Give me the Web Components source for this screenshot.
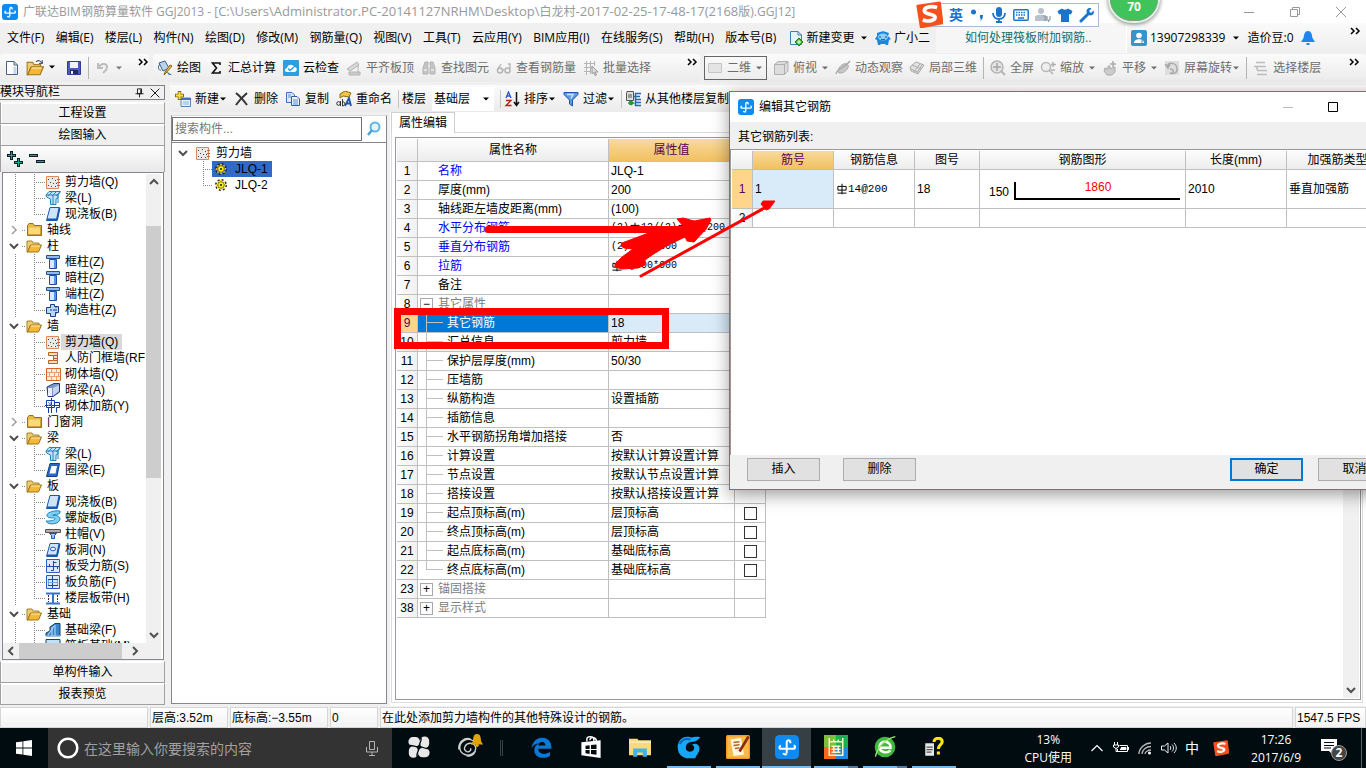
<!DOCTYPE html>
<html lang="zh-CN">
<head>
<meta charset="utf-8">
<title>广联达BIM钢筋算量软件 GGJ2013</title>
<style>
html, body { margin: 0; height: 100%; }
body {
  display: flex; flex-direction: column; position: relative; overflow: hidden;
  background: #f0f0f0; color: #000;
  font: 12px/16px "Open Sans", "Noto Sans CJK SC", sans-serif;
}
main { flex: 1; min-height: 0; display: grid; grid-template-columns: 165px minmax(0, 1fr); column-gap: 5px; }
.right { display: flex; flex-direction: column; min-height: 0; min-width: 0; gap: 2px; }
.panes { flex: 1; min-height: 0; display: grid; grid-template-columns: 217px minmax(0, 1fr); column-gap: 3px; }
</style>
</head>
<body>
<title-bar></title-bar>
<menu-bar></menu-bar>
<main-tools></main-tools>
<main>
  <nav-panel></nav-panel>
  <div class="right">
    <edit-tools></edit-tools>
    <div class="panes">
      <component-list></component-list>
      <property-panel></property-panel>
    </div>
  </div>
</main>
<status-bar></status-bar>
<task-bar></task-bar>
<ime-bar></ime-bar>
<load-ball>70</load-ball>
<rebar-dialog></rebar-dialog>
<ink-layer></ink-layer>

<script>
const BASE = `
*,*::before,*::after{box-sizing:border-box}
button,input,select{font:inherit;color:inherit;margin:0;padding:0;border:0;border-radius:0;background:none}
a{color:inherit;text-decoration:none}
`;
const SONG = `"Liberation Sans","Noto Sans CJK SC",sans-serif`;

function define(tag, css, html) {
  const template = document.createElement('template');
  template.innerHTML = `<style>${BASE}${css}</style>${html}`;
  customElements.define(tag, class extends HTMLElement {
    constructor() {
      super();
      this.attachShadow({ mode: 'open' }).append(template.content.cloneNode(true));
    }
  });
}

/* ---------- icons ---------- */
const G = '#b4b4b4';
const folderOpen = `<path d="M1 3h5l1 2h6v3H4l-2 6H1z" fill="#f0cf72" stroke="#a9802a"/><path d="M4.500 7H15.500L12.500 14H1.500z" fill="#f7b733" stroke="#9a7420"/><path d="M5 8h9" stroke="#fff0b8"/>`;
const hook = `<path d="M10.300 5.500C10.500 3 7.800 2.800 7.800 5v7.200M7.800 12.500c-.8.800-2 .500-2.300-.5M4 7.200C2.500 7.500 2.600 9.300 4 9.200H12c1.800 0 1.800-2.200.4-2.200" fill="none" stroke="#fff" stroke-width="1.300"/>`;
const sogou = `<path d="M1 3L14 1l1.500 12L3 15.500z" fill="#f4511e" stroke="#f4511e" stroke-width="1.500" stroke-linejoin="round"/><path d="M12.500 3.800C8 2.500 4.500 4 5 6.200c.5 2 6 1.300 6.300 3.300.3 2-4 3-7.300 1.800" fill="none" stroke="#fff" stroke-width="2.200"/>`;
const concrete = `<path d="M1.500 2.500H13.500V14.500H1.500z" fill="#ebe9e7" stroke="#d98a5c"/><path d="M3 5.500h1M7 4.500h1M10 6.500h1M5 8.500h1M8 9.500h1M3 11.500h1M10 12.500h1M6 12.500h1M11 9.500h1" stroke="#444"/><path d="M12 5.500h3M12 8.500h3M12 11.500h3" stroke="#c9662c"/>`;
const column = `<path d="M1.500 1.500H14.500V4.500H1.500z" fill="#8fb9ee" stroke="#1d4fa6"/><path d="M4.500 5.500H11.500V14.500H4.500z" fill="#d9e9fb" stroke="#1d4fa6"/><path d="M10 6v8" stroke="#5e93dc" stroke-width="2"/>`;
const slab = `<path d="M5 1.500H14.500L12 14.500H1.500z" fill="#cfe4fb" stroke="#1b56b4"/><path d="M2 13.500H12L14.500 2" fill="none" stroke="#1b56b4" stroke-width="2"/>`;
const frame = (inner) => `<path d="M1.500 1.500H14.500V14.500H1.500z" fill="#dce9fb" stroke="#2a5cc0"/>${inner}`;
const ICONS = {
  app: `<rect width="16" height="16" rx="3" fill="#0d8bf2"/>${hook}`,
  doc: `<path d="M2.500 1.500H10L13.500 5V14.500H2.500z" fill="#fff" stroke="#47607e"/><path d="M10 1.500V5H13.500" fill="none" stroke="#47607e"/><path d="M11 7v7" stroke="#c5d5ea" stroke-width="3"/>`,
  open: folderOpen + `<path d="M9 2.500c2-2 4-1 5 1M14.500 1v3h-3" fill="none" stroke="#4c5b70"/>`,
  save: `<path d="M1.500 1.500H14.500V14.500H1.500z" fill="#5058c8" stroke="#343b96"/><path d="M4 2H12V8H4z" fill="#f2f2fa"/><path d="M4 10H12V14H4z" fill="#222a60"/><path d="M5 11h2v3H5z" fill="#eee"/>`,
  undo: `<path d="M3 3v5h5M3.500 7.500C6 2.500 12 3 12 7c0 3-2 4-4 6" fill="none" stroke="#bdbdbd" stroke-width="2"/>`,
  paint: `<path d="M2 3L8 1L12 8L6 11z" fill="#b9d4ee" stroke="#3e6189"/><path d="M3 4c-3 3-1 7 1 6" fill="none" stroke="#3e6189"/><path d="M15 6L9 13L7 15L8 12L13 5z" fill="#f0c24c" stroke="#8b6510"/><path d="M9 11l3 4h3z" fill="#3b70bd"/>`,
  sigma: `<path d="M12 5V3H4.500L8.500 8L4.500 13H12V11" fill="none" stroke="#111" stroke-width="1.600"/>`,
  cloud: `<rect width="16" height="16" rx="1" fill="#2b9fe0"/><path d="M4 12C1 12 1.500 8 4 8C4.500 4 10 3.500 11 7c4 0 3.500 5 0 5z" fill="#fff"/><path d="M5 8.500l2 2L11 7" fill="none" stroke="#2b9fe0" stroke-width="1.500"/>`,
  flush: `<path d="M1 9L11 2l2 3L4 11z" fill="#d8d8d8" stroke="${G}"/><path d="M3 12H14V15H3zM12 5v8" fill="#ccc" stroke="${G}"/>`,
  find: `<path d="M2 14V8L4 2H7V14zM9 14V2h3l2 6v6z" fill="#c4c4c4" stroke="${G}"/><path d="M3 10h3M10 10h3M7 6h2" stroke="#fff"/>`,
  glasses: `<circle cx="4" cy="10.500" r="2.500" fill="none" stroke="${G}" stroke-width="1.500"/><circle cx="11.500" cy="10.500" r="2.500" fill="none" stroke="${G}" stroke-width="1.500"/><path d="M6.500 10h2M2 9L5 4M14 9V4h-2" fill="none" stroke="${G}" stroke-width="1.300"/>`,
  batch: `<path d="M1 3.500H12M1 7.500H9M1 11.500H8M3.500 1V15M7.500 1V14M11.500 1V6" stroke="${G}"/><path d="M9 6l6 6h-3l1.500 3-1.500.5-1-3-2 1z" fill="#ddd" stroke="#999"/>`,
  two: `<path d="M1.500 3.500H14.500V12.500H1.500z" fill="#e4e4e4" stroke="#c4c4c4"/>`,
  cube: `<path d="M1.500 4.500L5 1.500H15L11.500 4.500zM1.500 4.500H11.500V14.500H1.500zM11.500 4.500L15 1.500V11L11.500 14.500z" fill="#dcdcdc" stroke="#b0b0b0"/>`,
  orbit: `<path d="M4 13C1 9 8 2 12 4s-2 10-8 9z" fill="#c8c8c8" stroke="#aaa"/><path d="M1 14C2 8 9 9 15 1" fill="none" stroke="#aaa" stroke-width="1.500"/>`,
  local: `<path d="M1 7L7 2L15 5L9 14L2 11z" fill="#e2e2e2" stroke="#aaa"/><path d="M3 5l9 4M5 12l6-8M2 9l7 3M8 13l5-8" stroke="#aaa"/>`,
  full: `<circle cx="7" cy="7" r="6" fill="#e4e4e4" stroke="#b4b4b4" stroke-width="1.500"/><path d="M7 3v8M3 7h8" stroke="#a4a4a4" stroke-width="1.500"/><path d="M11 11l4 4" stroke="#b4b4b4" stroke-width="2"/>`,
  zoom: `<circle cx="6" cy="7" r="4.500" fill="#eee" stroke="#b8b8b8" stroke-width="1.500"/><path d="M9 10l4 4M13 2v5M11 4.500h5M11 10h4" stroke="#b0b0b0" stroke-width="1.500"/>`,
  pan: `<path d="M3 8l3 1V6l2 0v3l5-2v5l-3 3H5L2 11z" fill="#ccc" stroke="#aaa"/><path d="M11 1v6M8 4h6" stroke="#aaa" stroke-width="1.500"/>`,
  rotate: `<path d="M1 1H15V15H1z" fill="#dedede"/><path d="M3 7c1-5 9-5 10 1s-5 6-7 5M6 9c3 0 5 2 1 5M1 4l3 4 2-4" fill="none" stroke="#aaa" stroke-width="1.500"/>`,
  floor: `<path d="M3 2.500H12M4 6.500H13M4 10.500H14M4 14.500H14M4 6v4M1 6.500H4" stroke="#bcbcbc" stroke-width="1.500"/>`,
  change: `<path d="M2.500 1.500H10L13.500 5V14.500H2.500z" fill="#e6f3fb" stroke="#3e7fae"/><path d="M10 1.500V5H13.500" fill="none" stroke="#3e7fae"/><path d="M11 8L15 12L11 16L7 12z" fill="#43b42b" stroke="#207d12"/><path d="M9 12h4M11 10v4" stroke="#fff"/>`,
  xiaoer: `<path d="M2 3l3-1c2-1 4-1 6 0l3 1-1 3 3 3-2 1-1 5h-2l-1-1H6l-1 1H3L2 10 0 9l2-3z" fill="#1a87dd"/><ellipse cx="8" cy="7" rx="5" ry="3.500" fill="#8fd0f7"/><path d="M5 6v2M11 6v2M6 9c1 1 3 1 4 0" stroke="#114d8c" fill="none"/>`,
  user: `<rect width="16" height="16" rx="2" fill="#3a93c8"/><circle cx="8" cy="5.500" r="2.800" fill="#fff"/><path d="M3 13c0-5 10-5 10 0z" fill="#fff"/><path d="M11 10v4" stroke="#3a93c8"/>`,
  bell: `<path d="M8 1c4 0 4 5 4.500 7L15 12H1L3.500 8C4 6 4 1 8 1z" fill="#1f86ee"/><path d="M6.500 14h3" stroke="#1f86ee" stroke-width="2"/>`,
  add: `<path d="M6 7H15.500V15.500H6z" fill="#e9f1fb" stroke="#5a82b8"/><path d="M6 8h10" stroke="#3f72bc" stroke-width="2"/><path d="M8 11h6M8 13h6" stroke="#8fb0dc"/><path d="M4.500 0V9M0 4.500H9" stroke="#8a6d14" stroke-width="3.500"/><path d="M4.500 1V8M1 4.500H8" stroke="#f7dc43" stroke-width="2"/>`,
  del: `<path d="M2 2Q7 6 13 14M13 2Q6 8 2 14" stroke="#333" stroke-width="2" fill="none"/>`,
  copy: `<path d="M1.500 1.500H7L9.500 4V11.500H1.500z" fill="#dce9fb" stroke="#3b6db8"/><path d="M6.500 5.500H12L14.500 8V14.500H6.500z" fill="#e9f1fd" stroke="#2f5ea8"/><path d="M3 4h3M3 6h3M8 9h5M8 11h5M8 13h5" stroke="#5e8fd4"/>`,
  rename: `<path d="M4 3L9 0L15 2L13 6L7 5L4 7z" fill="#f2c544" stroke="#8f6b16"/><path d="M9 15L13 7L15 15M10 12.500h4" fill="none" stroke="#2456a8" stroke-width="1.800"/><circle cx="2.500" cy="12.500" r="1.800" fill="none" stroke="#333"/><path d="M4.500 10v5M6.500 8v7M6.500 11c3-1 3 4 0 4" fill="none" stroke="#333"/>`,
  sort: `<path d="M2 7L4.500 1L7 7M3 5h3" fill="none" stroke="#2a56c6" stroke-width="1.300"/><path d="M2 9.500H7L2 14.500H7.500" fill="none" stroke="#b32020" stroke-width="1.300"/><path d="M12.500 1V14M10 11l2.500 3.500L15 11" fill="none" stroke="#111" stroke-width="1.500"/>`,
  filter: `<path d="M1 1.500H15V3.500L9.500 9V15L6.500 13V9L1 3.500z" fill="#5b9be6" stroke="#1d55b0"/><path d="M4 3.500h6l-2 4" fill="none" stroke="#cfe4ff" stroke-width="1.500"/>`,
  fromfloor: `<path d="M2 .5H8.500V9.500H1.500V3z" fill="#ddd" stroke="#555"/><path d="M3 4h4M3 6h4" stroke="#555"/><path d="M10 2.500h6M9 5.500h6M10 8.500h6M10 11.500h6M10 14.500h6M10.500 2v13" stroke="#2a66b8" stroke-width="1.500"/><path d="M5 10v4M3 12h5l-2-2M6 14l2-2" stroke="#1e9a35" stroke-width="1.700" fill="none"/>`,
  search: `<circle cx="9" cy="6" r="4.500" fill="#e3f4ff" stroke="#5db5ec" stroke-width="2"/><path d="M6 9L2 14" stroke="#4aa3dc" stroke-width="2.500"/>`,
  gear: `<circle cx="8" cy="8" r="5.200" fill="none" stroke="#222" stroke-width="1.500" stroke-dasharray="2 2.080"/><path d="M8 3V13M3 8H13M4.500 4.500L11.500 11.500M11.500 4.500L4.500 11.500" stroke="#f5e000" stroke-width="1.600"/><circle cx="8" cy="8" r="3.300" fill="#fff01c" stroke="#55500a" stroke-width=".8"/><circle cx="8" cy="8" r="1.100" fill="#222"/>`,
  expand: `<path d="M4.500 0V9M0 4.500H9M11.500 7V16M7 11.500H16" stroke="#022" stroke-width="3"/><path d="M4.500 1V8M1 4.500H8M11.500 8V15M8 11.500H15" stroke="#1aa59a"/>`,
  collapse: `<path d="M0 4.500H9M7 10.500H16" stroke="#022" stroke-width="3"/><path d="M1 4.500H8M8 10.500H15" stroke="#1aa59a"/>`,
  folder: `<path d="M1.500 3.500L3 1.500H7L8.500 3.500H15.500V13.500H1.500z" fill="#e5b84a" stroke="#8f6d22"/><path d="M2.500 5.500H14.500V12.500H2.500z" fill="#fbd978"/><path d="M2 13h13M15 5v8" stroke="#a87c1c"/>`,
  folderopen: folderOpen,
  wall: concrete, column, slab,
  beam: `<path d="M1 5L4 1.500H15.500L13 5V8L11 9V14.500H5.500V9L1.500 7z" fill="#bfe3f8" stroke="#2383bd"/><path d="M1 5H12M8 6v8M13 4v9M3 6l4-4M7 6l4-4M11 6l4-4" stroke="#2383bd"/>`,
  tiecol: `<path d="M5.500 2.500h4v2h4v6h-3v4h-5v-3h-4v-6h4z" fill="#b9d6f7" stroke="#16408c"/><path d="M11 4v8M5 8h5" stroke="#16408c" stroke-dasharray="2 1"/>`,
  doorwall: `<path d="M3.500 2.500H12.500V13.500H3.500V10.500H8.500V5.500H3.500z" fill="#fbe0cf" stroke="#c65b1c"/><path d="M9 5.500h3M9 8.500h3M9 10.500h3" stroke="#c65b1c"/>`,
  brick: `<path d="M1.500 2.500H15.500V14.500H1.500z" fill="#fdeee4" stroke="#d1672f"/><path d="M2 6.500H15M2 10.500H15M6.500 3V6M11.500 3V6M4.500 7v3M9.500 7v3M13.500 7v3M6.500 11v3M11.500 11v3" stroke="#e5a07c"/>`,
  hidbeam: `<path d="M2 5L9 1.500H14.500V10L8 14.500H3z" fill="#7b96cc" stroke="#22356b"/><path d="M3 6H7V14H3z" fill="#e8eefa"/><path d="M8 6v8l6-5V3z" fill="#c4d3ee"/>`,
  brickbar: `<path d="M1.500 2.500h8v7h-8zM0 7.500h15M6.500 0v15M3.500 10v5M9.500 4.500h5v5h-3v5" fill="none" stroke="#1738a8"/><path d="M3 4l4 4M7 3l-4 5" stroke="#6e8bd8"/>`,
  ring: `<path d="M5 1.500H14.500L12 14.500H1.500z" fill="#2d68c4" stroke="#143e8a"/><path d="M6.500 4H12L10.500 11.500H4.500z" fill="#fff"/>`,
  spiral: `<path d="M15 1C8 0 1 3 2 6s9 1 8 3-6 2-9 2c2 5 14 3 14-2S6 6 8 5s5 0 7-2z" fill="#7fd0f5" stroke="#1f84c0"/>`,
  cap: `<path d="M.5 3.500H15.500V6.500H.5z" fill="#b0b0b0" stroke="#555"/><path d="M4.500 7.500H11.500L9.500 9.500V12.500H6.500V9.500z" fill="#9fc3f3" stroke="#1b50b0"/>`,
  hole: slab + `<ellipse cx="8" cy="7" rx="2.500" ry="1.800" fill="#fff" stroke="#1b56b4"/>`,
  rebars: frame(`<path d="M2 8.500H14M8.500 3V12.500H6M4.500 6v2M12.500 11V8M8.500 4.500h3" stroke="#1b46a8" fill="none"/>`),
  rebarf: frame(`<path d="M7.500 2V14M3 5.500H13M3 11.500H13" stroke="#1b46a8" fill="none"/><path d="M3.500 6v5M12.500 6v5M3 8.500H13" stroke="#7ea0e0"/>`),
  band: `<path d="M1 3.500H15M1 13.500H15" stroke="#3773cc" stroke-width="2"/><path d="M3.500 5V12M12.500 5V12" stroke="#333" stroke-dasharray="2 1"/><path d="M8 4V13" stroke="#3773cc" stroke-width="2"/>`,
  fbeam: `<path d="M1 14V11L5 9V5L10 1.500H15V14z" fill="#3a86cc" stroke="#0e4474"/><path d="M7 5v9M10 3v11M1 14h14" stroke="#bfe0f8"/><path d="M3 13L9 4" stroke="#bfe0f8"/>`,
  raft: `<path d="M1 1.500H15V14H1z" fill="#bfe0f8" stroke="#0e4474"/>`,
  min: `<path d="M3 8.500H13" stroke="currentColor"/>`,
  max: `<path d="M3.500 3.500H12.500V12.500H3.500z" fill="none" stroke="currentColor"/>`,
  restore: `<path d="M3.500 5.500H10.500V12.500H3.500zM5.500 5V3.500H12.500V10.500H11" fill="none" stroke="currentColor"/>`,
  close: `<path d="M3 3L13 13M13 3L3 13" stroke="currentColor"/>`,
  pin: `<path d="M5.500 3.500H10.500V9.500H5.500zM3 9.500H13M8 10V14" fill="none" stroke="#000"/><path d="M9.500 4V9" stroke="#000"/>`,
  up: `<path d="M4 10L8 6L12 10" fill="none" stroke="#505050" stroke-width="2"/>`,
  down: `<path d="M4 6L8 10L12 6" fill="none" stroke="#505050" stroke-width="2"/>`,
  left: `<path d="M10 4L6 8L10 12" fill="none" stroke="#505050" stroke-width="2"/>`,
  right: `<path d="M6 4L10 8L6 12" fill="none" stroke="#505050" stroke-width="2"/>`,
  closed: `<path d="M6 4L10 8L6 12" fill="none" stroke="#a0a0a0" stroke-width="1.500"/>`,
  more: `<path d="M4 5l3 3-3 3M9 5l3 3-3 3" fill="none" stroke="#000" stroke-width="1.500"/>`,
  drop: `<path d="M5 6.500H11L8 9.500z" fill="currentColor"/>`,
  rebar: `<path d="M8 1V15M2.500 4.500H13.500V9.500H2.500zM2 13.500H14" fill="none" stroke="#000" stroke-width="1.300"/>`,
  sogou,
  comma: `<circle cx="4.500" cy="5" r="2.500" fill="#1b74cc"/><path d="M11 8h3c0 3-1 5-3 6 1-2 1-3 0-3z" fill="#1b74cc"/>`,
  mic: `<rect x="5" y="0" width="6" height="10" rx="3" fill="#1b74cc"/><path d="M2 6c0 8 12 8 12 0M8 12v3M5 15h6" fill="none" stroke="#1b74cc" stroke-width="1.800"/>`,
  keyboard: `<rect x=".8" y="2.800" width="14.400" height="10.400" rx="1" fill="#fff" stroke="#1b74cc" stroke-width="1.500"/><path d="M3 5.500H13M3 8H13" stroke="#1b74cc" stroke-width="1.500" stroke-dasharray="1.500 1"/><path d="M5 11h6" stroke="#1b74cc" stroke-width="1.500"/>`,
  person: `<circle cx="6" cy="4" r="3" fill="#b9c1ca"/><path d="M0 14V10c0-3 12-3 12 0v4z" fill="#b9c1ca"/><path d="M8 9h2v5M12 9v4h3V9M13.500 13v2" fill="none" stroke="#8f9aa6" stroke-width="1.200"/>`,
  shirt: `<path d="M5 1.500C6 3 10 3 11 1.500L15.500 4L14 7.500L12 7V15H4V7L2 7.500L.5 4z" fill="#1b74cc"/>`,
  wrench: `<path d="M2 14L9 7" stroke="#1b74cc" stroke-width="3" stroke-linecap="round"/><path d="M14.500 3.500L12 6L10 4L12.500 1.500C9 0 6.500 3 8 6.500l1.500 1.500C13 9.500 16 7 14.500 3.500z" fill="#1b74cc"/>`,
  windows: `<path d="M0 2.300L6.500 1.400V7.600H0zM7.300 1.300L16 0V7.600H7.300zM0 8.400H6.500V14.600L0 13.700zM7.300 8.400H16V16L7.300 14.700z" fill="#fff"/>`,
  cortana: `<circle cx="8" cy="8" r="6.200" fill="none" stroke="#fff" stroke-width="1.700"/>`,
  micline: `<path d="M5.500 1.500H10.500V9.500H5.500zM2.500 7v5H13.500V7M8 12v3M5 15.500h6" fill="none" stroke="#b4b4b4" stroke-width="1"/>`,
  pinwheel: `<g fill="#e8e8e8"><rect x=".3" y=".8" width="8.400" height="6.600" rx="3.200"/><rect x="8.800" y=".3" width="6.600" height="8.400" rx="3.200"/><rect x="7.300" y="8.800" width="8.400" height="6.600" rx="3.200"/><rect x=".6" y="7.500" width="6.600" height="8.400" rx="3.200"/></g><path d="M8.300 7.800C8 4 11 3 9 1M8.300 7.800C12 8 13 10 15.500 9M8.300 7.800C8 12 5 13 7 15.500M8.300 7.800C4 8 3 6 .5 7" fill="none" stroke="#000c10" stroke-width=".9"/>`,
  swirl: `<path d="M12 3C7 0 1 4 1.500 9S8 16 12 13s2-8-2-8-6 4-4 6 5 0 4-2M10 1.500C5 0 0 4 .7 10M14 11c-1 3-4 5-7 4" fill="none" stroke="#d0d0d0" stroke-width="1.100"/>`,
  goldbell: `<path d="M8 1c5 0 4 6 5 9l2 3H1l2-3C4 7 3 1 8 1z" fill="#dfa406"/><circle cx="8" cy="14" r="2" fill="#dfa406"/>`,
  edge: `<path d="M.5 8.500C1 4 4 .5 8.500.5c5 0 7.500 4 7 8.500H5.500c0 4 5 5 9 2.500v3C9 17.500 2.500 15.500 2.500 10c0-2.500 1.500-4 3.500-5C3.500 5 1.500 6.500.5 8.500zM5.500 6.500h5.500c0-3.500-5-3.500-5.500 0z" fill="#0a78d7"/>`,
  store: `<path d="M1 4.500L15 3V16L1 14z" fill="#fff"/><path d="M5 4V2c0-2 5-2 5 0v2M7 3c1-3 5-2 5 1" fill="none" stroke="#fff"/><path d="M4 7l3-.3V9.500H4zM8 6.600l4-.4v3.300H8zM4 10.200h3V13l-3-.4zM8 10.200h4v3.400l-4-.5z" fill="#000c10"/>`,
  explorer: `<path d="M0 2H6L7 3H16V14H0z" fill="#f9d97c"/><path d="M0 4H16V5H0z" fill="#fdf0c0"/><path d="M3 9H13V15H10V12H6V15H3z" fill="#3fb3ea"/>`,
  glodon: `<path d="M15.500 1.500C12 .5 11 2 9 1.500 3 0 0 5 .5 9c.5 5 5 7 8 6.500l4 0c-1-1 2.500-3 2.500-6.500C15 6.500 12 5 10 6.500c2 .5 2 4-.5 4.500S5.500 10 6 7.500 9 4.500 11 4.500c2 0 3-1.500 4.500-3z" fill="#19a6f5"/><path d="M2 6c1-3 4-4 7-3" fill="none" stroke="#0567c0" stroke-width="1.500"/>`,
  notes: `<rect width="16" height="16" rx="1" fill="#f79a1e"/><path d="M1 1H15V15H1z" fill="#fbb94b"/><path d="M3 3L10 2L12 13L5 14z" fill="#fff6e0"/><path d="M5 5l4-.5M5 7l4-.5M6 9l3-.5" stroke="#b0612a"/><path d="M15 1L9 11" stroke="#8c2d0d" stroke-width="1.800"/>`,
  calc: `<path d="M0 0H8V8H0z" fill="#7cbf3a"/><path d="M8 0H16V8H8z" fill="#1cae52"/><path d="M0 8H8V16H0z" fill="#f4691f"/><path d="M8 8H16V16H8z" fill="#1f8be0"/><path d="M3 4.500H13M3 13.500H13M3.500 2V14M12.500 2V14M6.500 3v2M9.500 3v2M5 7.500H11M5 9.500H11M5 11.500H11M6.500 7v5M9.500 7v5" fill="none" stroke="#fff3c4"/>`,
  green: `<circle cx="8" cy="8" r="7.500" fill="#3ebb3f"/><path d="M4 8.500H12C12.500 3 4 2.500 4 8c0 4 5.500 5 8 2.500" fill="none" stroke="#fff" stroke-width="1.800"/><path d="M1 15C3 7 9 2 15.500.5" fill="none" stroke="#9fe36b"/>`,
  help: `<path d="M1 5H8V15H1z" fill="#e8e8e8"/><path d="M2 8h5M2 10h5M2 12h4" stroke="#555"/><path d="M8 4C8 0 15 0 14.500 4c0 2-3 2.500-3 5.500M11.500 11.500V14" fill="none" stroke="#ffe900" stroke-width="2.500"/>`,
  chev: `<path d="M2.500 11L8 5.500L13.500 11" fill="none" stroke="#fff" stroke-width="1.200"/>`,
  battery: `<path d="M6.500 5.500H14.500V11.500H4.500V9" fill="none" stroke="#fff"/><path d="M15.500 7v3M8 7.500h5v2H7" stroke="#fff" fill="#fff"/><path d="M1.500 2v3M4.500 2v3M.5 5H5.500V7L3 8.500L.5 7zM3 8v3.500h2" stroke="#fff" fill="none"/>`,
  wifi: `<path d="M2 14C2 8 8 3 14 3M5 14C5 10 9 6.500 14 6.500M8 14C8 12 11 10 14 10" fill="none" stroke="#b8b8b8" stroke-width="1.300"/><circle cx="12.500" cy="13" r="1.500" fill="#fff"/>`,
  volume: `<path d="M.5 6H3.500L7 3V13L3.500 10H.5zM9 6c1 1 1 3 0 4M11 4.500c2 2 2 5 0 7M13 3c3 3 3 7 0 10" fill="none" stroke="#eee"/>`,
  note: `<path d="M0 1H16V13H11V16L8 13H0z" fill="#fff"/><path d="M3 4.500H13M3 7.500H13M3 10H10" stroke="#000c10"/>`
};

customElements.define('ui-icon', class extends HTMLElement {
  connectedCallback() {
    if (this.shadowRoot) return;
    const size = this.getAttribute('size') || 16;
    this.attachShadow({ mode: 'open' }).innerHTML =
      `<style>:host{display:block;flex:none;width:${size}px;height:${size}px}svg{display:block}</style>
       <svg width="${size}" height="${size}" viewBox="0 0 16 16" aria-hidden="true">${ICONS[this.getAttribute('name')]}</svg>`;
  }
});

/* ---------- toolbar pieces ---------- */
define('tool-button', `
:host{display:block;flex:none;color:#000}
:host([off]){color:#6d6d6d}
button{display:flex;align-items:center;height:24px;white-space:nowrap}
.t{margin-left:4px}
.d{display:none;margin:0 -4px;width:16px}
:host([menu]) .d{display:block}
:host([menu="wide"]) .d{margin:0 -4px 0 0}
:host([framed]) button{border:1px solid #666;padding-left:2px;padding-right:0}
:host([framed]) .d{margin:0 -1px 0 0}
`, `<button type="button"><slot name="icon"></slot><span class="t"><slot></slot></span><ui-icon class="d" name="drop"></ui-icon></button>`);

const tool = (icon, text, attrs = '') => `<tool-button ${attrs}><ui-icon slot="icon" name="${icon}"></ui-icon>${text}</tool-button>`;

/* ---------- title bar ---------- */
define('title-bar', `
:host{display:flex;align-items:center;height:23px;flex:none;background:#fff;color:#999;padding:0 17px 0 2px}
h1{font:inherit;margin:0 auto 0 5px;white-space:nowrap}
.p{font-size:13px}
.c{display:flex;gap:30px}
button{display:block}
`, `<ui-icon name="app"></ui-icon>
<h1>广联达BIM钢筋算量软件 GGJ2013 - [<span class="p">C:\\Users\\Administrator.PC-20141127NRHM\\Desktop\\</span>白龙村<span class="p">-2017-02-25-17-48-17(2168</span>版).GGJ12]</h1>
<div class="c"><button aria-label="最小化"><ui-icon name="min"></ui-icon></button><button aria-label="还原"><ui-icon name="restore"></ui-icon></button><button aria-label="关闭"><ui-icon name="close"></ui-icon></button></div>`);

/* ---------- menu bar ---------- */
const menus = ['文件(F)', '编辑(E)', '楼层(L)', '构件(N)', '绘图(D)', '修改(M)', '钢筋量(Q)', '视图(V)', '工具(T)', '云应用(Y)', 'BIM应用(I)', '在线服务(S)', '帮助(H)', '版本号(B)'];
define('menu-bar', `
:host{display:flex;height:30px;flex:none;align-items:stretch}
nav{display:flex;align-items:center;justify-content:space-between;padding:0 6px 0 7px;width:936px;flex:none;white-space:nowrap}
button{white-space:nowrap}
.i{display:flex;align-items:center;gap:3px}
nav .i ui-icon:last-child{margin:0 -8px 0 -2px}
.tip{flex:none;display:flex;align-items:center;width:190px;padding-left:29px;color:#0e6e6e;background:#f6f6f6;font-family:${SONG};white-space:nowrap}
.acct{flex:1;display:flex;align-items:center;background:linear-gradient(#fafafa,#eee);padding-left:4px;white-space:nowrap;border-left:1px solid #fff}
.more{align-self:flex-start;margin:0 3px 0 auto}
`, `<nav>${menus.map(m => `<button type="button">${m}</button>`).join('')}
<button type="button" class="i"><ui-icon name="change"></ui-icon>新建变更<ui-icon name="drop"></ui-icon></button>
<button type="button" class="i"><ui-icon name="xiaoer"></ui-icon><span>广小二</span></button></nav>
<a class="tip" href="#tip">如何处理筏板附加钢筋..</a>
<div class="acct"><button type="button" class="i"><ui-icon name="user"></ui-icon>13907298339<ui-icon name="drop"></ui-icon></button>
<button type="button" class="i">&nbsp;造价豆:0&nbsp;<ui-icon name="bell"></ui-icon></button><ui-icon class="more" name="more"></ui-icon></div>`);

define('main-tools', `
:host{display:flex;height:31px;flex:none;gap:4px;padding-top:1px}
div{display:flex;align-items:center;gap:7px;height:28px;background:linear-gradient(#fbfbfb,#ebebeb);border-radius:3px}
.a{width:149px;padding-left:4px;flex:none;gap:6px}
.b{width:547px;padding-left:4px;flex:none}
.c{flex:1;gap:6px;min-width:0}
button{display:flex}
.up{margin:0 0 12px auto}
.a .up{margin-right:-2px}
.c .up{margin-right:4px}
i{width:1px;height:22px;background:#b4b4b4;flex:none}
`, `<div class="a"><button aria-label="新建"><ui-icon name="doc"></ui-icon></button><button aria-label="打开"><ui-icon name="open" size="18"></ui-icon><ui-icon name="drop"></ui-icon></button><button aria-label="保存"><ui-icon name="save"></ui-icon></button><i></i><button aria-label="撤销"><ui-icon name="undo"></ui-icon><ui-icon name="drop" style="color:#777"></ui-icon></button><ui-icon class="up" name="more" ></ui-icon></div>
<div class="b">${tool('paint', '绘图')}${tool('sigma', '汇总计算')}${tool('cloud', '云检查')}${tool('flush', '平齐板顶', 'off')}${tool('find', '查找图元', 'off')}${tool('glasses', '查看钢筋量', 'off')}${tool('batch', '批量选择', 'off')}<ui-icon class="up" name="more"></ui-icon></div>
<div class="c">${tool('two', '二维', 'off framed menu="wide"')}${tool('cube', '俯视', 'off menu="wide"')}${tool('orbit', '动态观察', 'off')}${tool('local', '局部三维', 'off')}<i></i>${tool('full', '全屏', 'off')}${tool('zoom', '缩放', 'off menu="wide"')}${tool('pan', '平移', 'off menu="wide"')}${tool('rotate', '屏幕旋转', 'off menu')}<i></i>${tool('floor', '选择楼层', 'off')}<ui-icon class="up" name="more"></ui-icon></div>`);

define('edit-tools', `
:host{display:flex;align-items:center;gap:7px;height:27px;flex:none;padding-left:5px;background:linear-gradient(#fbfbfb,#ebebeb);overflow:hidden;white-space:nowrap}
i{width:1px;height:18px;background:#c4c4c4;flex:none;margin:0 -4px 0 -1px}
label{flex:none;display:flex;align-items:center;gap:6px}
.s{display:flex;align-items:center;background:#fff;height:24px;width:62px;padding-left:2px}
select{appearance:none;flex:1;height:20px;width:44px}
`, `${tool('add', '新建', 'menu')}${tool('del', '删除')}${tool('copy', '复制')}${tool('rename', '重命名')}<i></i>
<label>楼层<span class="s"><select><option>基础层</option></select><ui-icon name="drop"></ui-icon></span></label><i></i>
${tool('sort', '排序', 'menu')}${tool('filter', '过滤', 'menu')}<i></i>${tool('fromfloor', '从其他楼层复制构件')}`);

/* ---------- navigation tree ---------- */
const tree = [
  ['wall', '剪力墙(Q)'], ['beam', '梁(L)'], ['slab', '现浇板(B)', 'last'],
  ['+', '轴线'],
  ['-', '柱'], ['column', '框柱(Z)'], ['column', '暗柱(Z)'], ['column', '端柱(Z)'], ['tiecol', '构造柱(Z)', 'last'],
  ['-', '墙'], ['wall', '剪力墙(Q)', 'sel'], ['doorwall', '人防门框墙(RF'], ['brick', '砌体墙(Q)'], ['hidbeam', '暗梁(A)'], ['brickbar', '砌体加筋(Y)', 'last'],
  ['+', '门窗洞'],
  ['-', '梁'], ['beam', '梁(L)'], ['ring', '圈梁(E)', 'last'],
  ['-', '板'], ['slab', '现浇板(B)'], ['spiral', '螺旋板(B)'], ['cap', '柱帽(V)'], ['hole', '板洞(N)'], ['rebars', '板受力筋(S)'], ['rebarf', '板负筋(F)'], ['band', '楼层板带(H)', 'last'],
  ['-', '基础'], ['fbeam', '基础梁(F)'], ['raft', '筏板基础(M)']
];
const treeRow = ([icon, text, state = '']) => icon === '+' || icon === '-'
  ? `<li class="n"><ui-icon name="${icon === '+' ? 'closed' : 'down'}"></ui-icon><i></i><ui-icon name="${icon === '+' ? 'folder' : 'folderopen'}"></ui-icon><span>${text}</span></li>`
  : `<li class="${state}"><b></b><u></u><ui-icon name="${icon}"></ui-icon><span>${text}</span></li>`;
define('nav-panel', `
:host{display:flex;flex-direction:column;min-height:0;font-family:${SONG};padding-bottom:1px}
header{display:flex;align-items:center;height:15px;border:1px solid #808080;border-left:0;margin-bottom:2px;padding-right:2px;flex:none;line-height:13px}
header span{margin-right:auto;white-space:nowrap}
header ui-icon{margin-left:2px}
.sec{flex:none;height:22px;border:1px solid #a0a0a0;border-top-color:#fff;background:#f0f0f0;box-shadow:inset 1px 1px #fff}
.tools{flex:none;height:26px;display:flex;gap:6px;align-items:center;padding-left:6px;background:linear-gradient(#fdfdfd,#e8e8e8);border:1px solid #a0a0a0;border-width:0 1px}
.tree{flex:1;min-height:0;display:flex;flex-direction:column;margin:0 1px 1px 2px;border:1px solid #828790;background:#fff}
.view{flex:1;min-height:0;display:flex;padding-top:1px}
ul{list-style:none;margin:0;padding:0;flex:1;min-width:0;overflow:hidden}
li{display:flex;align-items:center;height:16px;white-space:nowrap}
li.n{padding-left:3px}
li.n i{width:4px;height:1px;background:repeating-linear-gradient(90deg,#888 0 1px,transparent 1px 2px)}
li.n span{margin-left:5px}
b{width:13px;height:16px;margin-right:18px;flex:none;background:repeating-linear-gradient(#888 0 1px,transparent 1px 2px) right/1px 100% no-repeat}
u{width:11px;height:16px;flex:none;background:repeating-linear-gradient(#888 0 1px,transparent 1px 2px) left top/1px 100% no-repeat,repeating-linear-gradient(90deg,#888 0 1px,transparent 1px 2px) left center/100% 1px no-repeat}
.last u{background-size:1px 50%,100% 1px}
li:not(.n) span{padding:0 4px}
.sel span{background:#d9d9d9}
.vs{width:15px;display:flex;flex-direction:column;background:#f0f0f0;flex:none;margin-right:2px}
.hs{height:16px;display:flex;background:#f0f0f0;flex:none;margin-right:2px}
.vs ui-icon,.hs ui-icon{flex:none}
`, `<header><span>模块导航栏</span><ui-icon name="pin" size="13"></ui-icon><ui-icon name="close" size="14"></ui-icon></header>
<button class="sec">工程设置</button><button class="sec">绘图输入</button>
<div class="tools"><button aria-label="展开"><ui-icon name="expand"></ui-icon></button><button aria-label="折叠"><ui-icon name="collapse"></ui-icon></button></div>
<div class="tree"><div class="view"><ul>${tree.map(treeRow).join('')}</ul>
<div class="vs"><ui-icon name="up"></ui-icon><p style="flex:36;margin:0"></p><p style="flex:251;margin:0;background:#cdcdcd"></p><p style="flex:148;margin:0"></p><ui-icon name="down"></ui-icon></div></div>
<div class="hs"><ui-icon name="left"></ui-icon><p style="flex:102;margin:0;background:#cdcdcd"></p><p style="flex:5;margin:0"></p><ui-icon name="right"></ui-icon><p style="width:18px;margin:0"></p></div></div>
<button class="sec">单构件输入</button><button class="sec">报表预览</button>`);

/* ---------- component list ---------- */
define('component-list', `
:host{display:flex;flex-direction:column;min-height:0;background:#fff;border:1px solid #828790;border-top-color:#dcdcdc;margin:1px 0 2px 1px;font-family:${SONG}}
form{display:flex;align-items:center;margin:0;border-bottom:1px solid #828790;height:27px;flex:none}
input{flex:1;min-width:0;height:24px;border:1px solid #707070;padding:0 2px}
input::placeholder{color:#777;opacity:1}
button{width:24px;display:flex;justify-content:center}
ul{list-style:none;margin:0;padding:2px 0 0 3px}
li{display:flex;align-items:center;height:16px;white-space:nowrap}
.r ui-icon+ui-icon{margin:0 5px 0 4px}
.k span{padding:0 4px 0 6px}
.k u{width:9px;height:16px;margin-left:28px;background:repeating-linear-gradient(#888 0 1px,transparent 1px 2px) left top/1px 100% no-repeat,repeating-linear-gradient(90deg,#888 0 1px,transparent 1px 2px) left center/100% 1px no-repeat}
.k:last-child u{background-size:1px 50%,100% 1px}
.k div{display:flex;align-items:center;padding-left:1px}
.on div{background:#316ac5;color:#000}
`, `<form><input type="text" aria-label="搜索构件" placeholder="搜索构件..."><button type="button" aria-label="搜索"><ui-icon name="search"></ui-icon></button></form>
<ul><li class="r"><ui-icon name="down"></ui-icon><ui-icon name="wall"></ui-icon><span>剪力墙</span></li>
<li class="k on"><u></u><div><ui-icon name="gear"></ui-icon><span>JLQ-1</span></div></li>
<li class="k"><u></u><div><ui-icon name="gear"></ui-icon><span>JLQ-2</span></div></li></ul>`);

/* ---------- property panel ---------- */
const R = '<ui-icon name="rebar" size="12"></ui-icon>';
const spec = (...parts) => `<span class="spec">${parts.map(p => `<span>${p}</span>`).join(R)}</span>`;
const props = [
  [1, '名称', 'JLQ-1', 'link'], [2, '厚度(mm)', '200'], [3, '轴线距左墙皮距离(mm)', '(100)'],
  [4, '水平分布钢筋', spec('(2)', '12/(2)', '10@200'), 'link'], [5, '垂直分布钢筋', spec('(2)', '12@200'), 'link'],
  [6, '拉筋', spec('', '6@600*600'), 'link'], [7, '备注', ''], [8, '其它属性', '', 'grp', '−'],
  [9, '其它钢筋', '18', 'kid sel'], [10, '汇总信息', '剪力墙', 'kid'], [11, '保护层厚度(mm)', '50/30', 'kid'],
  [12, '压墙筋', '', 'kid'], [13, '纵筋构造', '设置插筋', 'kid'], [14, '插筋信息', '', 'kid'],
  [15, '水平钢筋拐角增加搭接', '否', 'kid'], [16, '计算设置', '按默认计算设置计算', 'kid'],
  [17, '节点设置', '按默认节点设置计算', 'kid'], [18, '搭接设置', '按默认搭接设置计算', 'kid'],
  [19, '起点顶标高(m)', '层顶标高', 'kid chk'], [20, '终点顶标高(m)', '层顶标高', 'kid chk'],
  [21, '起点底标高(m)', '基础底标高', 'kid chk'], [22, '终点底标高(m)', '基础底标高', 'kid chk end'],
  [23, '锚固搭接', '', 'grp', '+'], [38, '显示样式', '', 'grp', '+']
];
const propRow = ([n, name, value, cls = '', sign]) => `<tr class="${cls}"><th scope="row">${n}</th>
<td class="nm"><div>${cls.includes('kid') ? '<i></i>' : sign ? `<button type="button">${sign}</button>` : ''}<span>${name}</span></div></td>
<td class="v">${value}</td><td class="c">${cls.includes('chk') ? `<input type="checkbox" aria-label="${name}">` : ''}</td></tr>`;
const GRID = `
table{border-collapse:separate;border-spacing:0;table-layout:fixed;font-family:${SONG};line-height:16px}
th,td{padding:0;border:solid #c0c0c0;border-width:0 1px 1px 0;font-weight:400;white-space:nowrap;overflow:hidden}
th{background:linear-gradient(90deg,#fff,#f0f0f0)}
thead th{background:linear-gradient(#fcfcfc,#ededed);text-align:center}
thead th.hot{background:linear-gradient(#f9d99f,#f1c15f);color:#5a005a}
.spec{display:flex;align-items:center;font:10px/16px "Liberation Mono",monospace}
`;
define('property-panel', GRID + `
:host{display:flex;flex-direction:column;min-height:0;min-width:0;background:#fff;padding:0 3px 3px 0;margin-top:-2px;font-family:${SONG}}
.tabs{display:flex;height:21px;flex:none;padding-left:1px}
.tabs button{width:64px;border:1px solid #d0d0d0;border-bottom:0;background:#fff}
.tabs i{flex:1;border-bottom:1px solid #d9d9d9}
.frame{flex:1;min-height:0;border:1px solid #dcdcdc;border-top:0;margin-left:1px;padding:4px 1px 2px 3px;display:flex}
.in{flex:1;min-width:0;border:1px solid #999;padding:1px;display:flex;justify-content:space-between}
table{width:369px;align-self:flex-start}
tr{height:19px} thead tr{height:23px}
td,tbody th{height:19px;line-height:18px}
.nm div{display:flex;align-items:center;height:18px;padding-left:20px}
.nm span{line-height:18px}
.kid .nm div{padding-left:8px}
.nm i{width:17px;height:18px;margin-right:4px;background:linear-gradient(#c0c0c0,#c0c0c0) left top/1px 100% no-repeat,linear-gradient(#c0c0c0,#c0c0c0) left 8px/100% 1px no-repeat}
.end .nm i{background-size:1px 9px,100% 1px}
.grp .nm div{padding-left:2px;color:#808080}
.nm button{width:13px;height:13px;border:1px solid #a8a8a8;color:#000;line-height:10px;margin-right:5px;background:#fff}
.link .nm{color:#00f}
.v{padding-left:2px}
.sel th{background:#ffd58c;color:#5a005a}
.sel .nm{background:#0078d7;color:#fff}
.sel .v,.sel .c{background:#d9eaf8}
.c{text-align:center}
input{appearance:none;width:13px;height:13px;border:1px solid #333;background:#fff;display:block;margin:0 auto}
.vs{width:16px;background:#f0f0f0;display:flex;flex-direction:column;justify-content:space-between}
.vs p{margin:0;flex:0 0 60%;background:#cdcdcd}
.vs .g{flex:1}
`, `<div class="tabs" role="tablist"><button role="tab">属性编辑</button><i></i></div>
<div class="frame"><div class="in"><table><colgroup><col style="width:21px"><col style="width:191px"><col style="width:126px"><col style="width:31px"></colgroup>
<thead><tr><th></th><th>属性名称</th><th class="hot">属性值</th><th></th></tr></thead><tbody>${props.map(propRow).join('')}</tbody></table>
<div class="vs"><ui-icon name="up"></ui-icon><p></p><span class="g"></span><ui-icon name="down"></ui-icon></div></div></div>`);

/* ---------- rebar dialog ---------- */
define('rebar-dialog', GRID + `
:host{position:absolute;left:729px;top:91px;width:681px;height:397px;display:flex;flex-direction:column;background:#f0f0f0;border:1px solid #2f86dc;box-shadow:0 5px 16px rgba(0,0,0,.38);font-family:${SONG}}
header{display:flex;align-items:center;height:30px;flex:none;background:#fff;padding:0 25px 0 8px}
h2{font:inherit;margin:0 auto 0 5px}
header button{margin-left:29px;display:block}
.lab{height:27px;flex:none;display:flex;align-items:center;padding:2px 0 0 8px}
.list{flex:1;min-height:0;background:#fff;border:1px solid #999;border-bottom:0;padding:1px 0 0 1px}
table{width:657px}
thead tr{height:19px}
tbody td{padding-left:2px}
tbody tr:first-child{height:39px}
tbody tr+tr{height:19px}
.on th{background:#ffd58c;color:#5a005a}
.on .cur{background:#d9eaf8}
.spec{font-size:11px}
.shape{display:flex;align-items:center;padding:0 5px 0 7px}
.shape span{margin:6px 5px 0 0}
.shape div{flex:1;height:18px;border:solid #000;border-width:0 0 2px 2px;color:#f00;text-align:center;line-height:10px;margin-top:4px}
footer{display:flex;align-items:center;height:34px;flex:none;padding:0 20px 6px 17px;gap:23px}
footer button{width:73px;height:23px;background:#e1e1e1;border:1px solid #adadad}
.ok{margin-left:auto;margin-right:-8px;border:2px solid #0078d7!important}
`, `<header><ui-icon name="app"></ui-icon><h2>编辑其它钢筋</h2><button aria-label="最小化" style="color:#bbb"><ui-icon name="min"></ui-icon></button><button aria-label="最大化"><ui-icon name="max"></ui-icon></button><button aria-label="关闭"><ui-icon name="close"></ui-icon></button></header>
<div class="lab">其它钢筋列表:</div>
<div class="list"><table><colgroup><col style="width:21px"><col style="width:81px"><col style="width:81px"><col style="width:65px"><col style="width:206px"><col style="width:101px"><col style="width:102px"></colgroup>
<thead><tr><th></th><th class="hot">筋号</th><th>钢筋信息</th><th>图号</th><th>钢筋图形</th><th>长度(mm)</th><th>加强筋类型</th></tr></thead>
<tbody><tr class="on"><th scope="row">1</th><td class="cur">1</td><td>${spec('', '14@200')}</td><td>18</td><td><div class="shape"><span>150</span><div>1860</div></div></td><td>2010</td><td>垂直加强筋</td></tr>
<tr><th scope="row">2</th><td></td><td></td><td></td><td></td><td></td><td></td></tr></tbody></table></div>
<footer><button>插入</button><button>删除</button><button class="ok">确定</button><button>取消</button></footer>`);

/* ---------- red pen marks ---------- */
define('ink-layer', `
:host{position:absolute;left:390px;top:190px;width:400px;height:170px;pointer-events:none}
svg{display:block}
`, `<svg width="400" height="170" viewBox="390 190 400 170" fill="none" stroke="#f00" aria-hidden="true">
<path d="M397.500 311.500H665.500V345.500H397.500z" stroke-width="7"/>
<path d="M488 229.500H700" stroke-width="7" stroke-linecap="round"/>
<path d="M677 219L683 218L694 221L710 218L711 220L706 229L694 242L687 241L685 237L668 245L652 255L645 260L645 265L638 268L622 269L615 267L615 264L622 257L633 249L624 248L621 246L622 243L646 234L660 227L684 227z" fill="#f00" stroke-linejoin="round"/>
<path d="M641 276L768 206" stroke-width="3" stroke-linecap="round"/>
<path d="M775 201L763 201L761 204L766 210L769 209z" fill="#f00"/></svg>`);

/* ---------- status bar ---------- */
define('status-bar', `
:host{display:flex;gap:2px;height:21px;flex:none;font-family:${SONG};padding-top:1px}
span{border:1px solid #d6d6d6;background:linear-gradient(#fff,#f2f2f2);padding:1px 0 0 1px;line-height:18px;white-space:nowrap;flex:none;overflow:hidden}
`, `<span style="width:148px"></span><span style="width:78px">层高:3.52m</span><span style="width:98px">底标高:−3.55m</span><span style="width:48px">0</span><span style="flex:1">在此处添加剪力墙构件的其他特殊设计的钢筋。</span><span style="width:71px">1547.5 FPS</span>`);

/* ---------- task bar ---------- */
define('task-slot', `
:host{display:block;width:49px;height:40px;flex:none}
button{width:100%;height:100%;display:grid;place-items:center;border-bottom:2px solid transparent}
:host([run]) button{border-image:linear-gradient(90deg,transparent 5px,#76b9ed 5px 45px,transparent 45px) 2}
:host([many]) button{border-image:linear-gradient(90deg,transparent 5px,#76b9ed 5px 36px,#4d7ba3 36px 45px,transparent 45px) 2}
:host([active]) button{background:#363f43;border-color:#76b9ed}
`, `<button type="button"><slot></slot></button>`);
const slot = (icon, size, attrs = '') => `<task-slot ${attrs}><ui-icon name="${icon}" size="${size}"></ui-icon></task-slot>`;
define('task-bar', `
:host{display:flex;height:40px;flex:none;background:#000c10;color:#fff;align-items:stretch}
.start{width:48px;display:grid;place-items:center;flex:none}
.find{width:344px;flex:none;background:#333;display:flex;align-items:center;padding:0 12px 0 8px;gap:4px;margin-right:2px}
.find input{flex:1;min-width:0;font-size:14px;height:24px}
.find input::placeholder{color:#a0a0a0;opacity:1}
.sep{width:3px;height:16px;margin:12px 14px 0 8px;border:solid #3a4448;border-width:0 1px;flex:none}
.bellwrap{position:relative;width:49px}
.bellwrap .b{position:absolute;left:27px;top:5px}
.tray{margin-left:auto;display:flex;align-items:center;gap:8px;padding-right:4px;white-space:nowrap}
.two{text-align:center;line-height:18px;padding-top:1px}
.clock{margin:0 12px 0 14px}
.zh{font-size:14px}
.note{position:relative;width:32px;height:20px}
.note b{position:absolute;left:10px;top:7px;width:16px;height:16px;border-radius:8px;background:#444;border:1px solid #999;line-height:14px;text-align:center}
.end{width:1px;height:40px;background:#59636a}
`, `<button class="start" aria-label="开始"><ui-icon name="windows"></ui-icon></button>
<div class="find"><ui-icon name="cortana" size="24"></ui-icon><input type="text" aria-label="搜索" placeholder="在这里输入你要搜索的内容"><ui-icon name="micline"></ui-icon></div>
${slot('pinwheel', 22)}<div class="bellwrap">${slot('swirl', 20)}<ui-icon class="b" name="goldbell" size="14"></ui-icon></div><i class="sep"></i>
${slot('edge', 21)}${slot('store', 22)}${slot('explorer', 22)}${slot('glodon', 24, 'run')}${slot('notes', 24, 'run')}${slot('app', 24, 'active')}${slot('calc', 24, 'many')}${slot('green', 22, 'many')}${slot('help', 20, 'run')}
<div class="tray"><div class="two" style="margin-right:9px">13%<br>CPU使用</div><ui-icon name="chev"></ui-icon><ui-icon name="battery"></ui-icon><ui-icon name="wifi"></ui-icon><ui-icon name="volume"></ui-icon><span class="zh">中</span><ui-icon name="sogou" style="margin:0 0 0 6px"></ui-icon><div class="two clock">17:26<br>2017/6/9</div><div class="note"><ui-icon name="note"></ui-icon><b>2</b></div><i class="end"></i></div>`);

/* ---------- floating desktop widgets ---------- */
define('ime-bar', `
:host{position:absolute;left:916px;top:0;display:flex;align-items:center;height:28px}
.s{position:relative;z-index:1}
div{display:flex;align-items:center;gap:6px;height:24px;margin-left:-14px;border:1px solid #a5bcd8;background:#fff;padding:0 3px 0 19px;margin-top:2px}
span{color:#1b74cc;font-weight:700;font-size:14px}
`, `<ui-icon class="s" name="sogou" size="27"></ui-icon><div><span>英</span><ui-icon name="comma"></ui-icon><ui-icon name="mic"></ui-icon><ui-icon name="keyboard"></ui-icon><ui-icon name="person"></ui-icon><ui-icon name="shirt"></ui-icon><ui-icon name="wrench"></ui-icon></div>`);
define('load-ball', `
:host{position:absolute;left:1108px;top:-29px;width:48px;height:48px;border-radius:24px;background:#3fc35a;border:2px solid #dff5e2;outline:1px solid #8a9a8c;outline-offset:-3px;box-shadow:0 1px 4px rgba(0,0,0,.5);color:#fff;font-weight:700;text-align:center;line-height:68px}
`, `<slot></slot>`);
</script>
</body>
</html>
